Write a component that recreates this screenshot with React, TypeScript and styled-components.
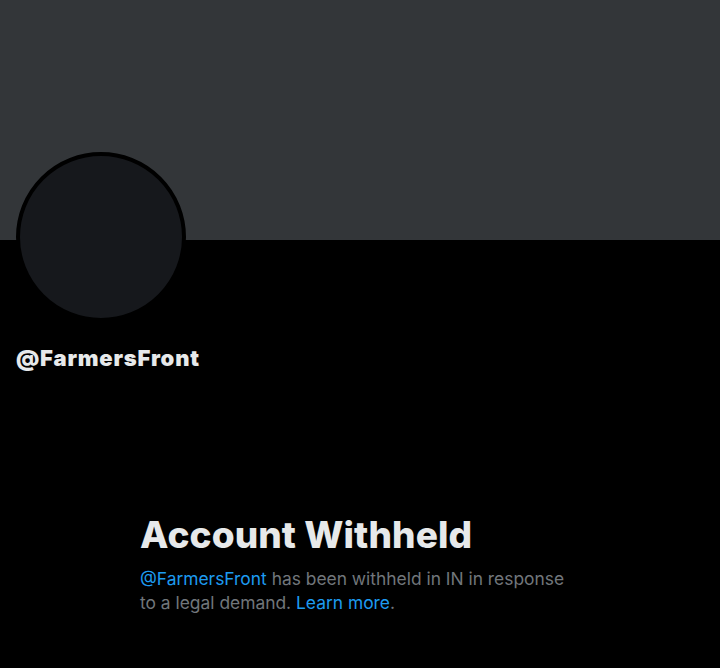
import React from "react";
import styled, { createGlobalStyle } from "styled-components";

const Global = createGlobalStyle`
  html, body { margin: 0; padding: 0; background: #000; }
  body { font-family: Inter, "Noto Sans", sans-serif; }
`;

const Page = styled.div`
  width: 720px;
  height: 668px;
  background: #000;
  overflow: hidden;
  display: flex;
  flex-direction: column;
`;

const Banner = styled.div`
  height: 240px;
  background: #333639;
  flex-shrink: 0;
`;

const ProfileHead = styled.div`
  padding: 0 16px;
  display: flex;
  flex-direction: column;
  align-items: flex-start;
`;

const Avatar = styled.div`
  width: 162px;
  height: 162px;
  margin-top: -88px;
  border-radius: 50%;
  background: #16181c;
  border: 4px solid #000;
`;

const Handle = styled.div`
  margin-top: 23px;
  font-size: 22px;
  line-height: 26px;
  font-weight: 900;
  color: #e7e9ea;
  letter-spacing: 0.8px;
`;

const Notice = styled.div`
  padding: 142px 0 0 140px;
  width: 440px;
`;

const Title = styled.h1`
  margin: 0;
  font-size: 37px;
  line-height: 44px;
  font-weight: 800;
  color: #e7e9ea;
  letter-spacing: 0.1px;
`;

const Body = styled.p`
  margin: 10px 0 0;
  font-size: 17.4px;
  line-height: 24px;
  color: #71767b;
`;

const Link = styled.a`
  color: #1d9bf0;
  text-decoration: none;
`;

export default function App() {
  return (
    <Page>
      <Global />
      <Banner />
      <ProfileHead>
        <Avatar />
        <Handle>@FarmersFront</Handle>
      </ProfileHead>
      <Notice>
        <Title>Account Withheld</Title>
        <Body>
          <Link href="#">@FarmersFront</Link> has been withheld in IN in response to a legal demand.{" "}
          <Link href="#">Learn more</Link>.
        </Body>
      </Notice>
    </Page>
  );
}
